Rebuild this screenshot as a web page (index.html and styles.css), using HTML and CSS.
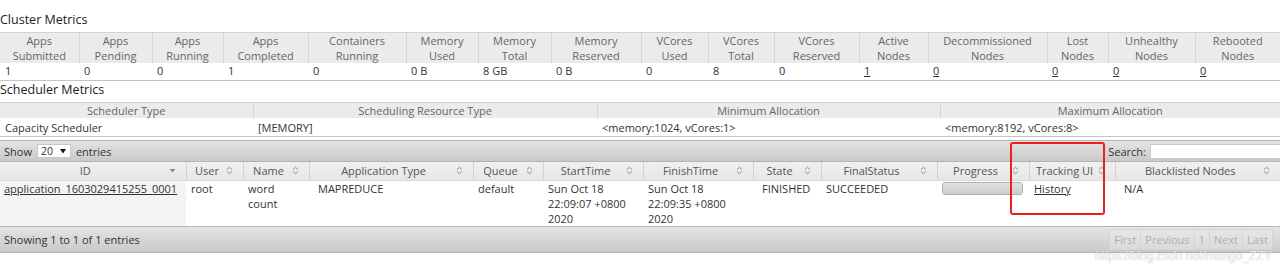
FILE: index.html
```html
<!DOCTYPE html>
<html>
<head>
<meta charset="utf-8">
<title>Cluster</title>
<link rel="stylesheet" href="styles.css">
</head>
<body>
<div class="page">
  <h3 class="title title-cluster">Cluster Metrics</h3>
  <table class="metrics cluster">
    <colgroup><col><col><col><col><col><col><col><col><col><col><col><col><col><col><col><col></colgroup>
    <thead>
      <tr>
        <th>Apps<br>Submitted</th><th>Apps<br>Pending</th><th>Apps<br>Running</th><th>Apps<br>Completed</th>
        <th>Containers<br>Running</th><th>Memory<br>Used</th><th>Memory<br>Total</th><th>Memory<br>Reserved</th>
        <th>VCores<br>Used</th><th>VCores<br>Total</th><th>VCores<br>Reserved</th><th>Active<br>Nodes</th>
        <th>Decommissioned<br>Nodes</th><th>Lost<br>Nodes</th><th>Unhealthy<br>Nodes</th><th>Rebooted<br>Nodes</th>
      </tr>
    </thead>
    <tbody>
      <tr>
        <td>1</td><td>0</td><td>0</td><td>1</td><td>0</td><td>0 B</td><td>8 GB</td><td>0 B</td>
        <td>0</td><td>8</td><td>0</td><td><a href="#">1</a></td><td><a href="#">0</a></td><td><a href="#">0</a></td><td><a href="#">0</a></td><td><a href="#">0</a></td>
      </tr>
    </tbody>
  </table>

  <h3 class="title title-sched">Scheduler Metrics</h3>
  <table class="metrics sched">
    <colgroup><col><col><col><col></colgroup>
    <thead>
      <tr><th>Scheduler Type</th><th>Scheduling Resource Type</th><th>Minimum Allocation</th><th>Maximum Allocation</th></tr>
    </thead>
    <tbody>
      <tr><td>Capacity Scheduler</td><td>[MEMORY]</td><td>&lt;memory:1024, vCores:1&gt;</td><td>&lt;memory:8192, vCores:8&gt;</td></tr>
    </tbody>
  </table>

  <div class="dt">
    <div class="bar bar-top">
      <div class="length">Show
        <span class="select">20<svg class="sel-arrow" width="6" height="5" viewBox="0 0 6 5"><path d="M0 0H6L3 4.5Z" fill="#111"/></svg></span>
        entries</div>
      <div class="search">Search: <span class="input"></span></div>
    </div>
    <table class="apps">
      <colgroup><col><col><col><col><col><col><col><col><col><col><col><col></colgroup>
      <thead>
        <tr>
          <th><div class="th"><span class="lbl">ID</span><svg class="sort" width="7" height="9" viewBox="0 0 7 9"><path d="M0.5 3H6.5L3.5 6.5Z" fill="#8a8a8a"/></svg></div></th>
          <th><div class="th"><span class="lbl">User</span><svg class="sort" width="7" height="9" viewBox="0 0 7 9"><path d="M1 3.6L3.5 1.2L6 3.6M1 5.4L3.5 7.8L6 5.4" fill="none" stroke="#8a8a8a"/></svg></div></th>
          <th><div class="th"><span class="lbl">Name</span><svg class="sort" width="7" height="9" viewBox="0 0 7 9"><path d="M1 3.6L3.5 1.2L6 3.6M1 5.4L3.5 7.8L6 5.4" fill="none" stroke="#8a8a8a"/></svg></div></th>
          <th><div class="th"><span class="lbl">Application Type</span><svg class="sort" width="7" height="9" viewBox="0 0 7 9"><path d="M1 3.6L3.5 1.2L6 3.6M1 5.4L3.5 7.8L6 5.4" fill="none" stroke="#8a8a8a"/></svg></div></th>
          <th><div class="th"><span class="lbl">Queue</span><svg class="sort" width="7" height="9" viewBox="0 0 7 9"><path d="M1 3.6L3.5 1.2L6 3.6M1 5.4L3.5 7.8L6 5.4" fill="none" stroke="#8a8a8a"/></svg></div></th>
          <th><div class="th"><span class="lbl">StartTime</span><svg class="sort" width="7" height="9" viewBox="0 0 7 9"><path d="M1 3.6L3.5 1.2L6 3.6M1 5.4L3.5 7.8L6 5.4" fill="none" stroke="#8a8a8a"/></svg></div></th>
          <th><div class="th"><span class="lbl">FinishTime</span><svg class="sort" width="7" height="9" viewBox="0 0 7 9"><path d="M1 3.6L3.5 1.2L6 3.6M1 5.4L3.5 7.8L6 5.4" fill="none" stroke="#8a8a8a"/></svg></div></th>
          <th><div class="th"><span class="lbl">State</span><svg class="sort" width="7" height="9" viewBox="0 0 7 9"><path d="M1 3.6L3.5 1.2L6 3.6M1 5.4L3.5 7.8L6 5.4" fill="none" stroke="#8a8a8a"/></svg></div></th>
          <th><div class="th"><span class="lbl">FinalStatus</span><svg class="sort" width="7" height="9" viewBox="0 0 7 9"><path d="M1 3.6L3.5 1.2L6 3.6M1 5.4L3.5 7.8L6 5.4" fill="none" stroke="#8a8a8a"/></svg></div></th>
          <th><div class="th"><span class="lbl">Progress</span><svg class="sort" width="7" height="9" viewBox="0 0 7 9"><path d="M1 3.6L3.5 1.2L6 3.6M1 5.4L3.5 7.8L6 5.4" fill="none" stroke="#8a8a8a"/></svg></div></th>
          <th><div class="th"><span class="lbl">Tracking UI</span><svg class="sort" width="7" height="9" viewBox="0 0 7 9"><path d="M1 3.6L3.5 1.2L6 3.6M1 5.4L3.5 7.8L6 5.4" fill="none" stroke="#8a8a8a"/></svg></div></th>
          <th><div class="th"><span class="lbl">Blacklisted Nodes</span><svg class="sort" width="7" height="9" viewBox="0 0 7 9"><path d="M1 3.6L3.5 1.2L6 3.6M1 5.4L3.5 7.8L6 5.4" fill="none" stroke="#8a8a8a"/></svg></div></th>
        </tr>
      </thead>
      <tbody>
        <tr>
          <td class="sorted"><a href="#">application_1603029415255_0001</a></td>
          <td>root</td>
          <td>word<br>count</td>
          <td class="pad-wide">MAPREDUCE</td>
          <td>default</td>
          <td>Sun Oct 18<br>22:09:07 +0800<br>2020</td>
          <td>Sun Oct 18<br>22:09:35 +0800<br>2020</td>
          <td class="pad-wide">FINISHED</td>
          <td>SUCCEEDED</td>
          <td><div class="progress"><div class="progress-fill"></div></div></td>
          <td><a href="#">History</a></td>
          <td class="pad-wide">N/A</td>
        </tr>
      </tbody>
    </table>
    <div class="bar bar-bottom">
      <div class="info">Showing 1 to 1 of 1 entries</div>
      <div class="paginate">
        <span class="pg">First</span><span class="pg">Previous</span><span class="pg">1</span><span class="pg">Next</span><span class="pg">Last</span>
      </div>
    </div>
  </div>

  <div class="annotation"></div>
  <div class="watermark">https://blog.csdn.net/mango_ZZY</div>
</div>
</body>
</html>
```

FILE: styles.css
```css
* { box-sizing: border-box; }
html, body { margin: 0; padding: 0; background: #fff; }
body {
  font-family: "Open Sans", "Noto Sans", sans-serif;
  font-size: 11px;
  color: #333;
  width: 1280px;
  height: 268px;
  overflow: hidden;
}
.page { position: relative; width: 1280px; }

a { color: #333; text-decoration: underline; }

.title {
  margin: 0;
  font-weight: normal;
  font-size: 12.5px;
  color: #222;
  line-height: 18px;
}
.title-cluster { padding-top: 11px; height: 32px; }
.title-sched { height: 21px; }

.metrics {
  border-collapse: collapse;
  table-layout: fixed;
  width: 1280px;
}
.metrics th {
  font-weight: normal;
  color: #666;
  background: #ebebeb;
  border-top: 1px solid #d2d2d2;
  border-left: 1px solid #d6d6d6;
  text-align: center;
  padding: 0 2px;
  line-height: 15px;
  white-space: nowrap;
}
.metrics th:first-child { border-left: none; }
.metrics td {
  padding: 0 5px;
  text-align: left;
  border-bottom: 1px solid #c4c4c4;
  background: #fff;
  color: #333;
  white-space: nowrap;
}
.cluster td { height: 17px; line-height: 16px; }
.sched th { height: 16px; line-height: 15px; }
.sched td { height: 18px; line-height: 17px; padding-top: 1px; }

.cluster col:nth-child(1) { width: 79px; }
.cluster col:nth-child(2) { width: 73px; }
.cluster col:nth-child(3) { width: 71px; }
.cluster col:nth-child(4) { width: 85px; }
.cluster col:nth-child(5) { width: 98px; }
.cluster col:nth-child(6) { width: 72px; }
.cluster col:nth-child(7) { width: 73px; }
.cluster col:nth-child(8) { width: 90px; }
.cluster col:nth-child(9) { width: 67px; }
.cluster col:nth-child(10) { width: 66px; }
.cluster col:nth-child(11) { width: 85px; }
.cluster col:nth-child(12) { width: 69px; }
.cluster col:nth-child(13) { width: 119px; }
.cluster col:nth-child(14) { width: 61px; }
.cluster col:nth-child(15) { width: 87px; }
.cluster col:nth-child(16) { width: 85px; }

.sched col:nth-child(1) { width: 253px; }
.sched col:nth-child(2) { width: 344px; }
.sched col:nth-child(3) { width: 343px; }
.sched col:nth-child(4) { width: 340px; }

.dt { margin-top: 3px; width: 1280px; }

.bar {
  display: flex;
  align-items: center;
  justify-content: space-between;
  background: linear-gradient(#e4e4e4, #c9c9c9);
  border-top: 1px solid #b4b4b4;
  border-bottom: 1px solid #b4b4b4;
  color: #333;
  padding: 0 0 0 4px;
}
.bar-top { height: 22px; }
.bar-bottom { height: 27px; }

.length { display: flex; align-items: center; gap: 4px; }
.select {
  display: inline-flex;
  align-items: center;
  justify-content: space-between;
  width: 34px;
  height: 14px;
  background: #fff;
  border: 1px solid #c8c8c8;
  padding: 0 4px 0 3px;
  font-size: 10.5px;
  line-height: 12px;
  margin: 0 1px;
}
.search { display: flex; align-items: center; gap: 4px; }
.input {
  display: block;
  width: 130px;
  height: 15px;
  background: #fff;
  border: 1px solid #c8c8c8;
  border-right: none;
}

.apps {
  border-collapse: collapse;
  table-layout: fixed;
  width: 1280px;
}
.apps col:nth-child(1) { width: 186px; }
.apps col:nth-child(2) { width: 57px; }
.apps col:nth-child(3) { width: 66px; }
.apps col:nth-child(4) { width: 164px; }
.apps col:nth-child(5) { width: 70px; }
.apps col:nth-child(6) { width: 100px; }
.apps col:nth-child(7) { width: 110px; }
.apps col:nth-child(8) { width: 68px; }
.apps col:nth-child(9) { width: 116px; }
.apps col:nth-child(10) { width: 92px; }
.apps col:nth-child(11) { width: 86px; }
.apps col:nth-child(12) { width: 165px; }

.apps th {
  height: 18px;
  padding: 0 10px 0 2px;
  font-weight: normal;
  color: #555;
  background: linear-gradient(#f0f0f0, #e6e6e6);
  border-left: 1px solid #d3d3d3;
  border-bottom: 1px solid #dcdcdc;
  white-space: nowrap;
}
.apps th:first-child { border-left: none; }
.th { display: flex; align-items: center; }
.lbl { flex: 1; text-align: center; }
.sort { flex: none; display: block; }

.apps td {
  vertical-align: top;
  padding: 0 5px;
  line-height: 15px;
  height: 45px;
  color: #333;
  background: #fff;
  white-space: nowrap;
}
.apps td.sorted { background: #f4f4f4; padding-left: 4px; }
.apps td.pad-wide { padding-left: 9px; }

.progress {
  margin-top: 1px;
  width: 81px;
  height: 13px;
  border: 1px solid #b0b0b0;
  border-radius: 3px;
  background: #fff;
  overflow: hidden;
}
.progress-fill {
  width: 100%;
  height: 100%;
  background: linear-gradient(#e2e2e2, #cdcdcd);
}

.info { color: #333; }
.paginate { display: flex; margin-right: 7px; }
.pg {
  display: block;
  padding: 0 4px;
  height: 21px;
  line-height: 20px;
  color: #b0b0b0;
  background: linear-gradient(#e6e6e6, #dadada);
  border: 1px solid #d4d4d4;
  border-left: none;
  font-size: 11px;
}
.pg:first-child { border-left: 1px solid #d4d4d4; }

.annotation {
  position: absolute;
  left: 1010px;
  top: 142px;
  width: 95px;
  height: 73px;
  border: 2px solid #ec1f1f;
  border-radius: 3px;
}
.watermark {
  position: absolute;
  left: 1095px;
  top: 250px;
  font-family: "Liberation Sans", Arial, sans-serif;
  font-size: 12px;
  line-height: 12px;
  color: rgba(255, 255, 255, 0.85);
  text-shadow: 0 0 1px rgba(120, 120, 120, 0.6);
  white-space: nowrap;
}
```
